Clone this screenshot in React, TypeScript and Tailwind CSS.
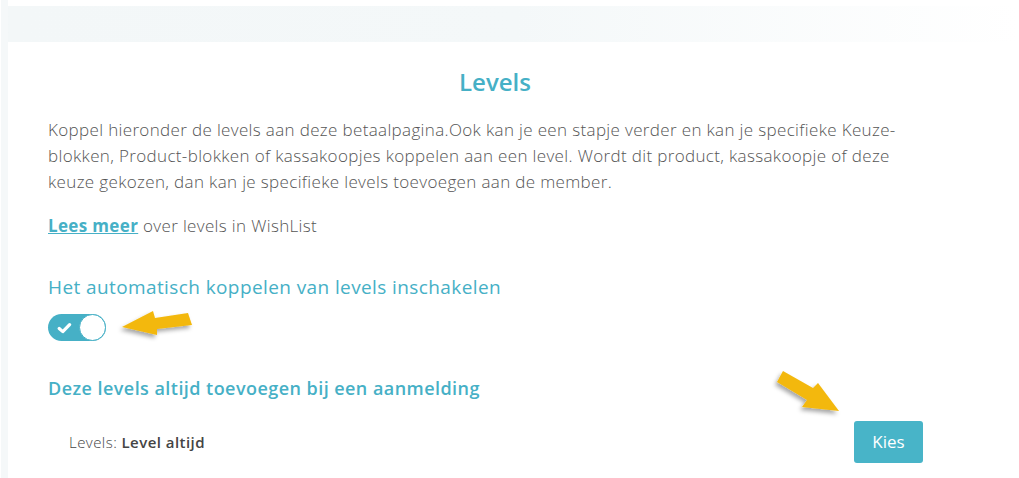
import React from "react";

export default function App() {
  return (
    <div className="relative w-[1019px] h-[478px] overflow-hidden bg-white flex" style={{ fontFamily: '"Open Sans", sans-serif' }}>
      <div className="w-[7px] ml-[1px] bg-[#f5f8f9] shrink-0" />
      <div className="flex-1 flex flex-col">
        <div className="mt-[6px] h-[36px] bg-gradient-to-r from-[#f3f7f8] via-[#f4f8f9] to-white" />
        <div className="pl-[40px] w-[942px] flex flex-col">
          <h1 className="mt-[24px] pr-[8px] text-center text-[24px] leading-[32px] font-semibold text-[#46b0c6]">Levels</h1>
          <p className="mt-[19px] text-[17px] leading-[26px] font-light tracking-[0.35px] text-[#555] w-[866px]">
            Koppel hieronder de levels aan deze betaalpagina.Ook kan je een stapje verder en kan je specifieke Keuze-blokken, Product-blokken of kassakoopjes koppelen aan een level. Wordt dit product, kassakoopje of deze keuze gekozen, dan kan je specifieke levels toevoegen aan de member.
          </p>
          <p className="mt-[18px] text-[17px] leading-[26px] font-light tracking-[0.35px] text-[#555]">
            <a className="font-bold text-[#46b0c6] underline">Lees meer</a> over levels in WishList
          </p>
          <h2 className="mt-[35px] text-[19px] leading-[26px] font-normal tracking-[0.4px] text-[#46b0c6]">Het automatisch koppelen van levels inschakelen</h2>
          <div className="mt-[14px] w-[58px] h-[27px] rounded-full bg-[#46b0c6] flex items-center justify-between pl-[9px]">
            <svg width="15" height="12" viewBox="0 0 15 12">
              <path d="M2.2 6.5 L5.8 9.6 L12.6 2.6" stroke="white" strokeWidth="3.2" fill="none" strokeLinecap="round" strokeLinejoin="round" />
            </svg>
            <div className="w-[27px] h-[27px] rounded-full bg-white border-[1.5px] border-[#46b0c6]" />
          </div>
          <h2 className="mt-[34px] text-[18px] leading-[26px] font-semibold tracking-[0.45px] text-[#46b0c6]">Deze levels altijd toevoegen bij een aanmelding</h2>
          <div className="mt-[20px] flex items-center justify-between">
            <div className="ml-[21px] text-[15px] tracking-[0.45px] text-[#444]">
              <span className="font-light">Levels: </span>
              <span className="font-semibold">Level altijd</span>
            </div>
            <button className="mr-[27px] w-[69px] h-[42px] rounded-[3px] bg-[#48b4c8] text-white text-[17px] font-normal">Kies</button>
          </div>
        </div>
      </div>
      <svg className="absolute left-0 top-0 pointer-events-none" width="1019" height="478" viewBox="0 0 1019 478">
        <defs>
          <filter id="sh" x="-30%" y="-30%" width="160%" height="160%">
            <feDropShadow dx="-2" dy="3" stdDeviation="2" floodColor="#000" floodOpacity="0.35" />
          </filter>
        </defs>
        <polygon points="122,327 153,311 155,318 188,313 192,325 157,329 157,335" fill="#f3b80c" filter="url(#sh)" />
        <polygon points="783,371 813,388 818,383 839,411 802,407 807,400 777,382" fill="#f3b80c" filter="url(#sh)" />
      </svg>
    </div>
  );
}
